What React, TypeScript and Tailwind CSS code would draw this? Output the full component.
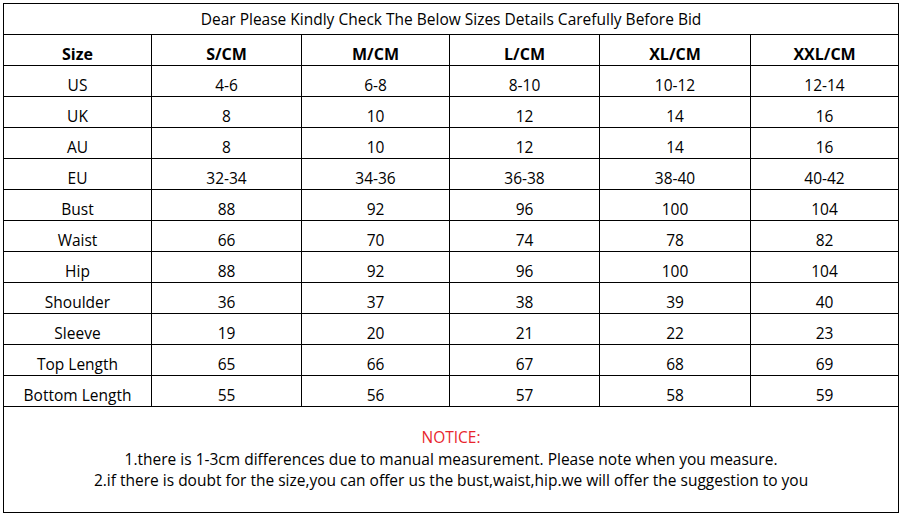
const headers = ["Size", "S/CM", "M/CM", "L/CM", "XL/CM", "XXL/CM"]

const rows: string[][] = [
  ["US", "4-6", "6-8", "8-10", "10-12", "12-14"],
  ["UK", "8", "10", "12", "14", "16"],
  ["AU", "8", "10", "12", "14", "16"],
  ["EU", "32-34", "34-36", "36-38", "38-40", "40-42"],
  ["Bust", "88", "92", "96", "100", "104"],
  ["Waist", "66", "70", "74", "78", "82"],
  ["Hip", "88", "92", "96", "100", "104"],
  ["Shoulder", "36", "37", "38", "39", "40"],
  ["Sleeve", "19", "20", "21", "22", "23"],
  ["Top Length", "65", "66", "67", "68", "69"],
  ["Bottom Length", "55", "56", "57", "58", "59"],
]

const widths = ["w-[148px]", "w-[150px]", "w-[148px]", "w-[150px]", "w-[151px]", "w-[148px]"]

export default function App() {
  return (
    <div className="w-[901px] h-[514px] bg-white pt-[3px] pl-[3px] font-['Open_Sans','Liberation_Sans',sans-serif] text-[15.5px] text-black">
      <table className="w-[895px] table-fixed border-collapse">
        <colgroup>
          {widths.map((w, i) => (
            <col key={i} className={w} />
          ))}
        </colgroup>
        <tbody>
          <tr>
            <td colSpan={6} className="h-[31px] border border-black p-0 text-center align-middle leading-[20px]">
              Dear Please Kindly Check The Below Sizes Details Carefully Before Bid
            </td>
          </tr>
          <tr>
            {headers.map((h) => (
              <td key={h} className="h-[31px] border border-black p-0 pt-[10px] text-center align-top text-[16px] leading-[18px] font-bold">
                {h}
              </td>
            ))}
          </tr>
          {rows.map((r) => (
            <tr key={r[0]}>
              {r.map((c, i) => (
                <td key={i} className="h-[31px] border border-black p-0 pt-[10px] text-center align-top leading-[18px]">
                  {c}
                </td>
              ))}
            </tr>
          ))}
          {/* notice */}
          <tr>
            <td colSpan={6} className="h-[106px] border border-black p-0 text-center align-middle leading-[21.5px]">
              <div className="text-[#e8262d]">NOTICE:</div>
              <div>1.there is 1-3cm differences due to manual measurement. Please note when you measure.</div>
              <div>2.if there is doubt for the size,you can offer us the bust,waist,hip.we will offer the suggestion to you</div>
            </td>
          </tr>
        </tbody>
      </table>
    </div>
  )
}
